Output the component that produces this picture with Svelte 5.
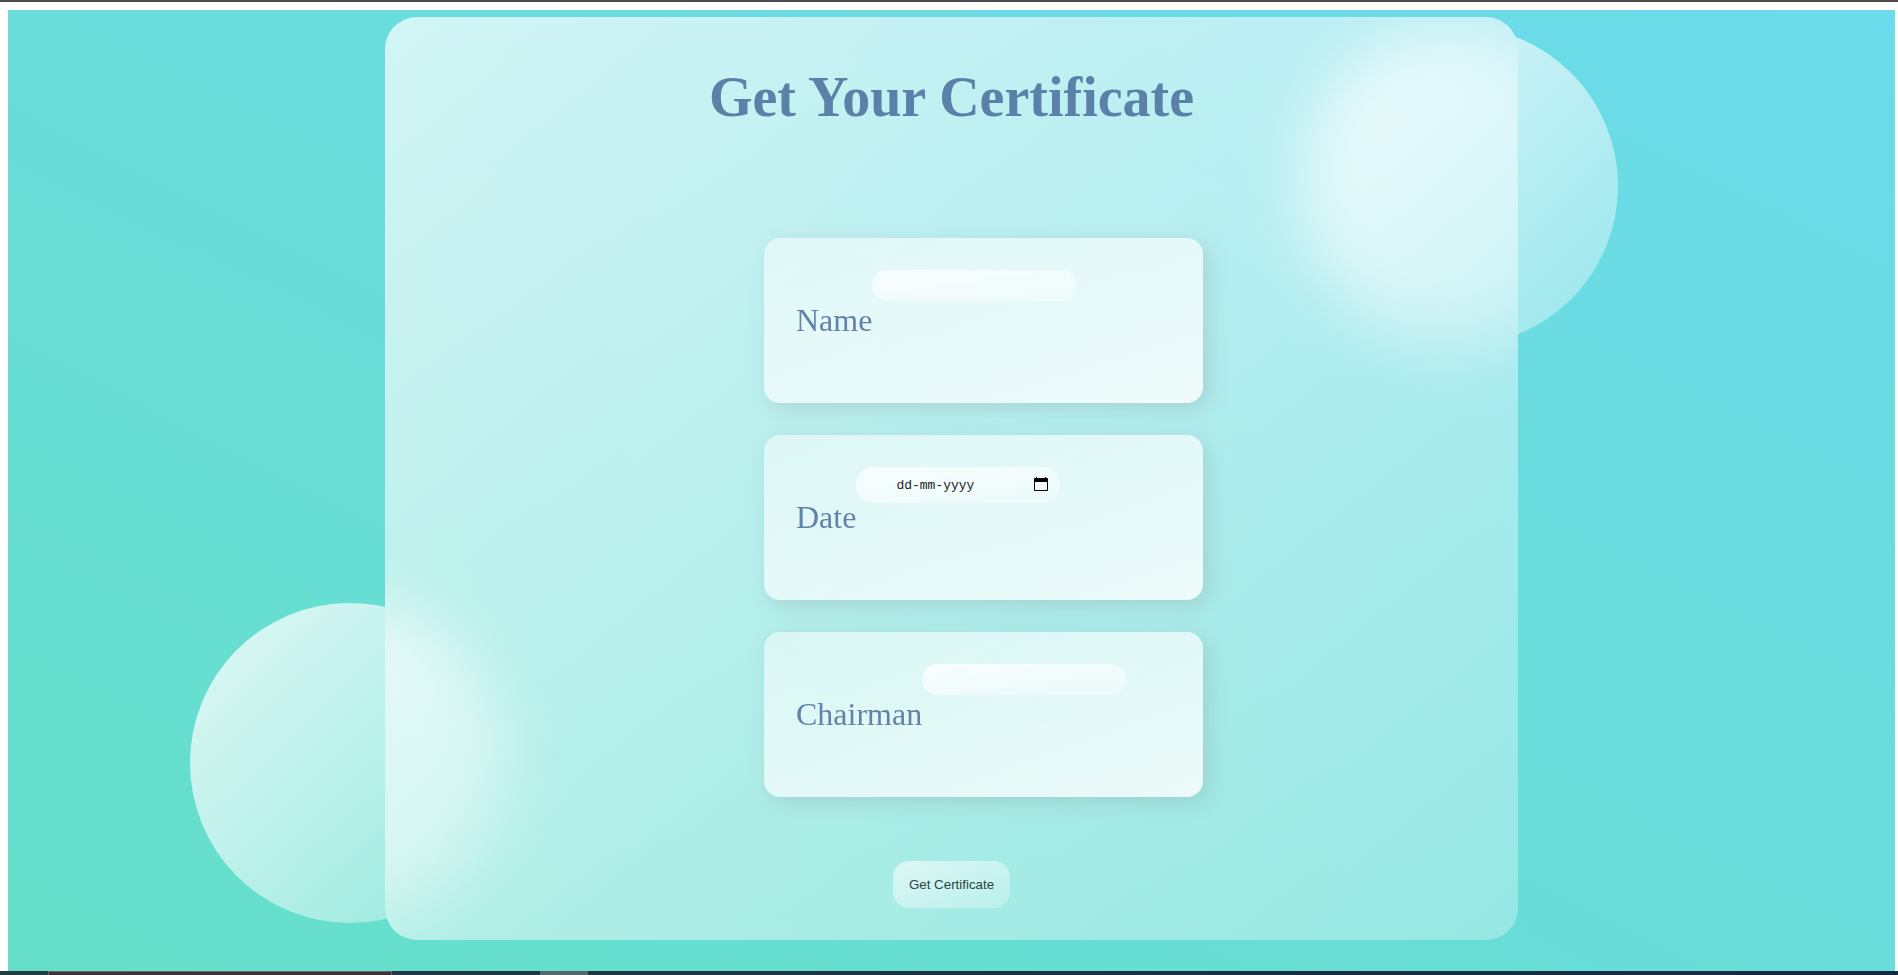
<script>
  let name = $state('');
  let date = $state('');
  let chairman = $state('');
</script>

<div class="page">
  <main>
    <div class="circle upper"></div>
    <div class="circle lower"></div>
    <div class="frost" aria-hidden="true">
      <div class="circle upper soft"></div>
      <div class="circle lower soft"></div>
    </div>
    <form class="glass" onsubmit={(event) => event.preventDefault()}>
      <h1>Get Your Certificate</h1>
      <div class="cards">
        <div class="card">
          <label for="name">Name</label>
          <input id="name" type="text" bind:value={name} />
        </div>
        <div class="card">
          <label for="date">Date</label>
          <div class="date">
            <input id="date" type="text" placeholder="dd-mm-yyyy" bind:value={date} />
            <button type="button" class="picker" aria-label="Open calendar">
              <svg viewBox="0 0 14 15" width="14" height="15" aria-hidden="true">
                <path d="M2 0h1v1h8V0h1v1h1a1 1 0 0 1 1 1v11a1 1 0 0 1-1 1H1a1 1 0 0 1-1-1V2a1 1 0 0 1 1-1h1zM1 5v8h12V5z" fill="#000" fill-rule="evenodd" />
              </svg>
            </button>
          </div>
        </div>
        <div class="card">
          <label for="chairman">Chairman</label>
          <input id="chairman" type="text" bind:value={chairman} />
        </div>
      </div>
      <button type="submit" class="submit">Get Certificate</button>
    </form>
  </main>
  <footer>
    <span class="task"></span>
    <span class="active"></span>
  </footer>
</div>

<style>
  :global(body) {
    margin: 0;
    background: #fff;
  }
  .page {
    box-sizing: border-box;
    min-height: 100vh;
    display: flex;
    flex-direction: column;
    border-top: 2px solid #4d4a4c;
    font-family: "Liberation Serif", "Times New Roman", serif;
  }
  main {
    position: relative;
    flex: 1;
    display: flex;
    justify-content: center;
    align-items: flex-start;
    margin: 8px 3px 0 8px;
    padding: 7px 0 31px;
    background: linear-gradient(to right top, #65dfc9, #6cdbeb);
  }
  .circle {
    position: absolute;
    width: 320px;
    height: 320px;
    border-radius: 50%;
    background: linear-gradient(to right bottom, rgba(255, 255, 255, 0.8), rgba(255, 255, 255, 0.3));
  }
  .upper {
    top: 16px;
    right: 277px;
  }
  .lower {
    bottom: 48px;
    left: 182px;
  }
  /* Frosted copy of the backdrop, cut to the outline of the glass panel. */
  .frost {
    position: absolute;
    inset: 0;
    clip-path: inset(7px 20% 31px 20% round 32px);
    background: linear-gradient(to right top, #65dfc9, #6cdbeb);
  }
  .soft {
    filter: blur(32px);
  }
  .glass {
    position: relative;
    box-sizing: border-box;
    width: 60%;
    display: flex;
    flex-direction: column;
    align-items: center;
    padding: 48px 0 32px;
    border-radius: 32px;
    background: linear-gradient(to right bottom, rgba(255, 255, 255, 0.7), rgba(255, 255, 255, 0.3));
  }
  h1 {
    margin: 0;
    font-size: 56px;
    line-height: 64px;
    font-weight: 600;
    color: #426696;
    opacity: 0.8;
  }
  .cards {
    box-sizing: border-box;
    width: 100%;
    display: flex;
    flex-direction: column;
    align-items: center;
    gap: 32px;
    margin-top: 109px;
    padding-left: 64px;
  }
  .card {
    box-sizing: border-box;
    width: 100%;
    max-width: 439px;
    display: flex;
    align-items: flex-start;
    padding: 32px;
    border-radius: 16px;
    background: linear-gradient(to left top, rgba(255, 255, 255, 0.8), rgba(255, 255, 255, 0.5));
    box-shadow: 6px 6px 20px rgba(122, 122, 122, 0.212);
  }
  label {
    margin: 32px 0;
    font-size: 32px;
    line-height: 37px;
    color: #426696;
    opacity: 0.8;
  }
  input {
    box-sizing: border-box;
    width: 204px;
    height: 31px;
    padding: 0 16px;
    border: 0;
    border-radius: 16px;
    background: linear-gradient(to right bottom, rgba(255, 255, 255, 0.8), rgba(255, 255, 255, 0.3));
    outline: 0;
  }
  .date {
    position: relative;
  }
  .date input {
    display: block;
    height: 36px;
    padding: 0 40px;
    border-radius: 18px;
    font-family: "Liberation Mono", monospace;
    font-size: 13px;
    color: #222;
  }
  .date input::placeholder {
    color: #222;
    opacity: 1;
  }
  .picker {
    position: absolute;
    top: 10px;
    right: 12px;
    display: flex;
    padding: 0;
    border: 0;
    background: none;
  }
  .submit {
    margin-top: 64px;
    padding: 16px;
    border: 0;
    border-radius: 16px;
    background: linear-gradient(to right bottom, rgba(255, 255, 255, 0.6), rgba(255, 255, 255, 0.24));
    font-family: "Liberation Sans", Arial, sans-serif;
    line-height: 15px;
    color: #2c4443;
  }
  footer {
    display: flex;
    height: 4px;
    background: linear-gradient(to right, #223c44, #17293f);
  }
  .task {
    box-sizing: border-box;
    width: 344px;
    margin-left: 48px;
    border: 1px solid #6b6666;
    border-bottom: 0;
    background: #383334;
  }
  .active {
    width: 48px;
    margin-left: 148px;
    background: #54686d;
  }
</style>
